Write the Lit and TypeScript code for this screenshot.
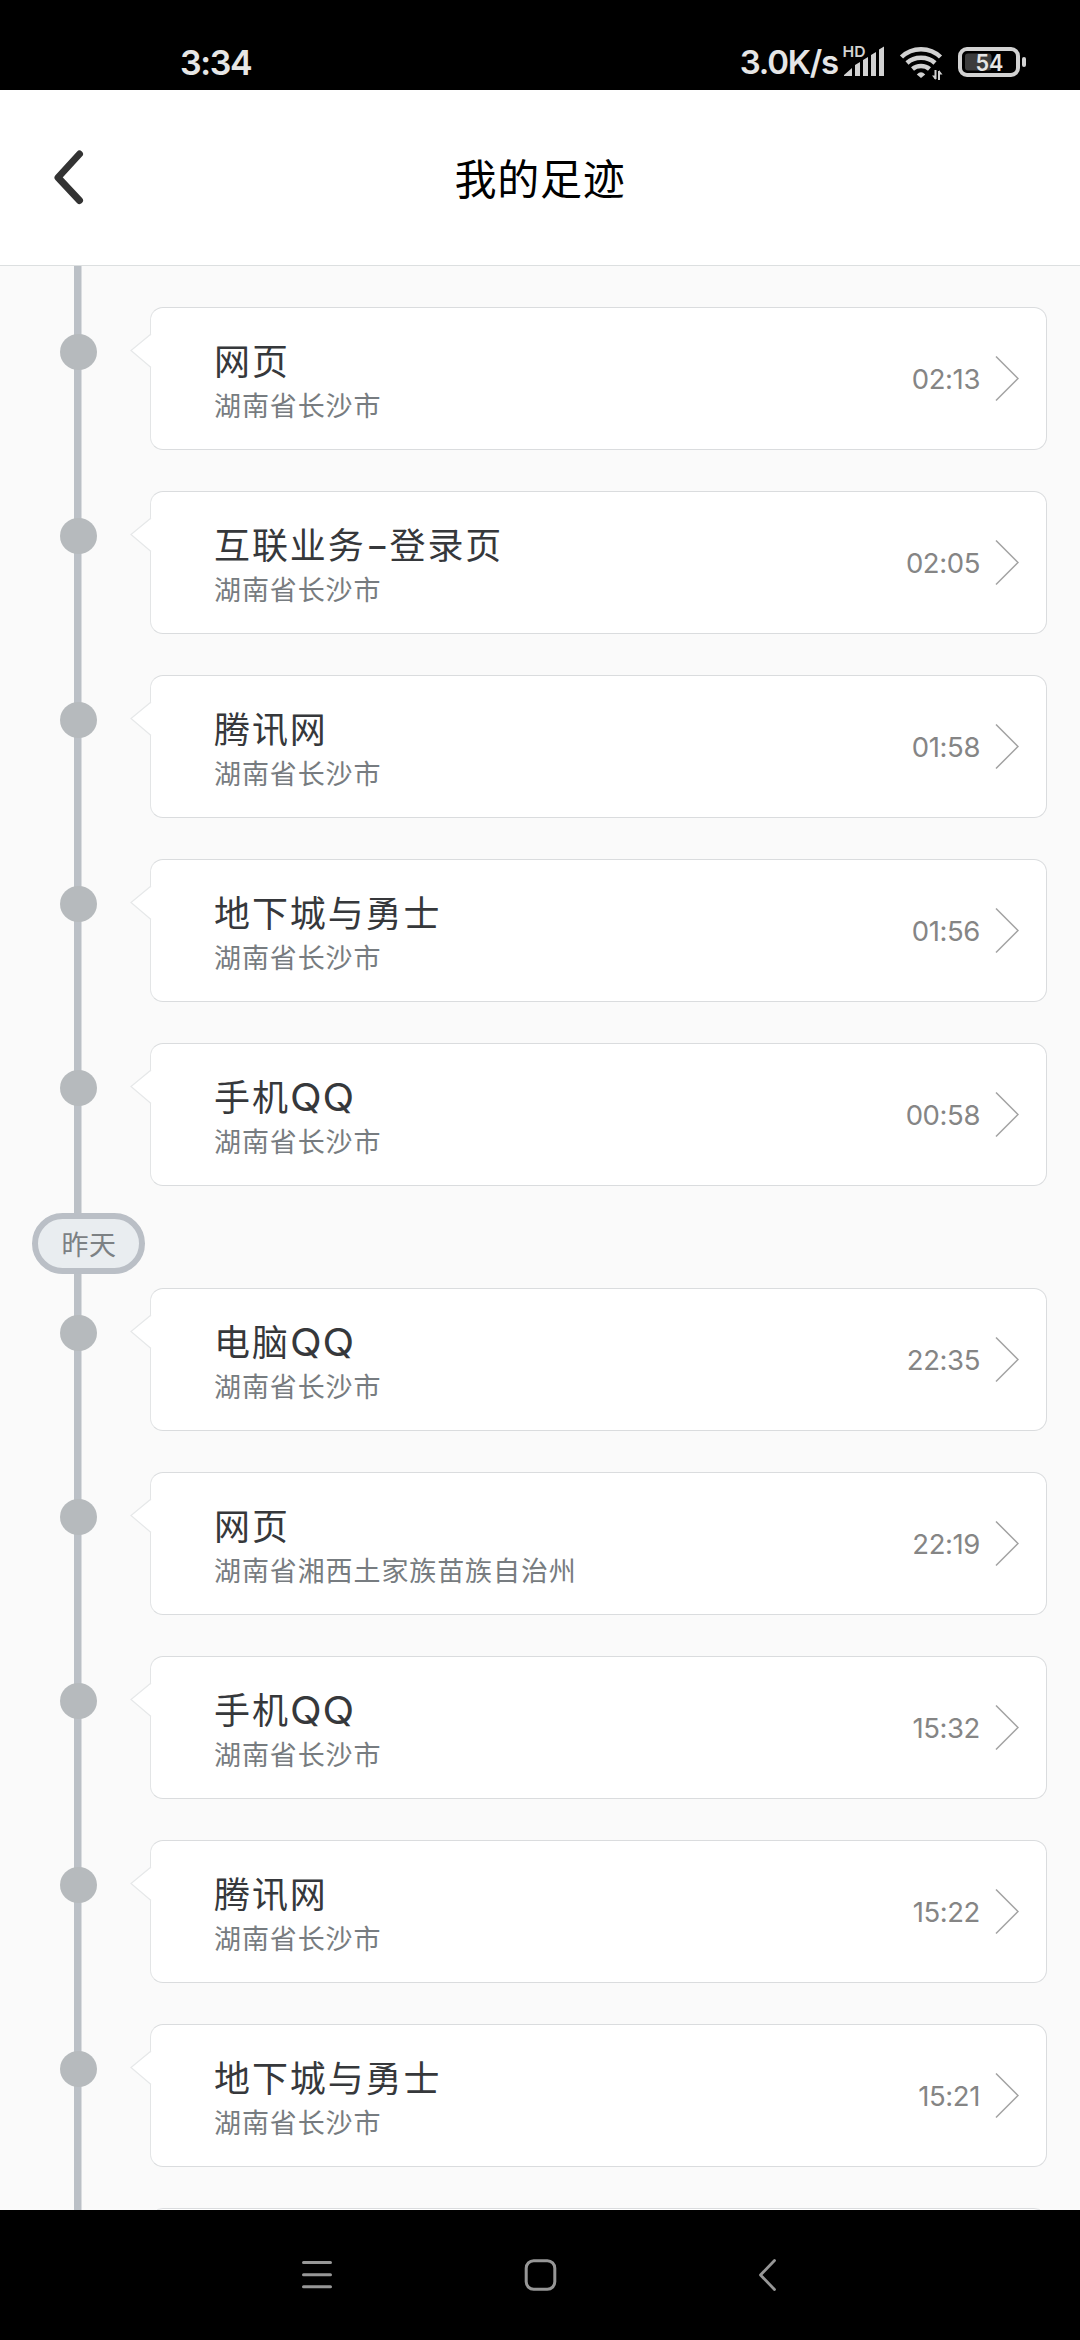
import { LitElement, html, css, svg } from "lit";
import { customElement, property } from "lit/decorators.js";

interface Visit {
  title: string;
  place: string;
  time: string;
}

const CHANGSHA = "湖南省长沙市";

const TODAY: Visit[] = [
  { title: "网页", place: CHANGSHA, time: "02:13" },
  { title: "互联业务-登录页", place: CHANGSHA, time: "02:05" },
  { title: "腾讯网", place: CHANGSHA, time: "01:58" },
  { title: "地下城与勇士", place: CHANGSHA, time: "01:56" },
  { title: "手机QQ", place: CHANGSHA, time: "00:58" },
];

const YESTERDAY: Visit[] = [
  { title: "电脑QQ", place: CHANGSHA, time: "22:35" },
  { title: "网页", place: "湖南省湘西土家族苗族自治州", time: "22:19" },
  { title: "手机QQ", place: CHANGSHA, time: "15:32" },
  { title: "腾讯网", place: CHANGSHA, time: "15:22" },
  { title: "地下城与勇士", place: CHANGSHA, time: "15:21" },
];

@customElement("status-bar")
class StatusBar extends LitElement {
  static styles = css`
    :host {
      display: flex;
      align-items: flex-start;
      box-sizing: border-box;
      height: 90px;
      padding: 42px 54px 0 180px;
      background: #000;
      color: #e6e6e6;
      font-family: Inter, "Noto Sans", sans-serif;
      font-weight: 600;
      line-height: 41px;
      white-space: nowrap;
    }
    .clock { font-size: 34px; letter-spacing: -1.4px; }
    .speed { margin-left: auto; font-size: 33px; letter-spacing: -1.2px; }
    svg { display: block; margin-top: -2px; }
    .signal { margin-left: 5px; }
    .wifi { margin-left: 14px; }
    .battery { margin-left: 14px; }
  `;

  render() {
    return html`
      <span class="clock">3:34</span>
      <span class="speed">3.0K/s</span>
      <svg class="signal" width="42" height="42" viewBox="843 40 42 42" fill="#d2d2d2">
        <text x="842.5" y="57" font-size="15" textLength="23" lengthAdjust="spacingAndGlyphs">HD</text>
        <path d="M844 76v-1l8-7v8zM855 76V65l5-3v14zM863 76V60l5-3v19zM871 76V55l5-3v24zM879 76V49.500l5-3V76z" />
      </svg>
      <svg class="wifi" width="44" height="42" viewBox="899 40 44 42" fill="none" stroke="#d2d2d2" stroke-width="4.500">
        <path d="M901.500 57C912 46.500 930 46.500 940.500 57M907 63C914.500 56 927.500 56 935 63M912.500 69C917 65 925 65 929.500 69" />
        <path d="M916.800 74.500q4.200-4.500 8.400 0l-4.200 3.500z" fill="#d2d2d2" stroke="none" />
        <path d="M935.500 70v9M939 80v-9" stroke-width="2" />
        <path d="M932 75.500h3.500v4.500zM942.500 74.500h-3.500v-4.500z" fill="#d2d2d2" stroke="none" />
      </svg>
      <svg class="battery" width="69" height="42" viewBox="957 40 69 42">
        <rect x="965" y="53.500" width="26.500" height="17" rx="3" fill="#3c3c3c" />
        <rect x="960" y="49" width="58" height="26" rx="7" fill="none" stroke="#d2d2d2" stroke-width="4" />
        <rect x="1022" y="57" width="4" height="10" rx="2" fill="#d2d2d2" />
        <text x="975.500" y="71.300" font-size="22.500" textLength="28" lengthAdjust="spacingAndGlyphs" fill="#e6e6e6">54</text>
      </svg>
    `;
  }
}

@customElement("page-header")
class PageHeader extends LitElement {
  static styles = css`
    :host {
      display: grid;
      grid-template-columns: 140px 1fr 140px;
      align-items: center;
      box-sizing: border-box;
      height: 176px;
      padding-bottom: 1px;
      border-bottom: 1px solid #dcdfe0;
      background: #fff;
    }
    svg { display: block; margin-left: 48px; }
    h1 {
      margin: 0;
      font: 400 42px/60px "Noto Sans CJK SC", sans-serif;
      letter-spacing: 0.8px;
      text-align: center;
      color: #000;
    }
  `;

  render() {
    return html`
      <svg width="40" height="64" viewBox="48 145 40 64" fill="none" stroke="#333" stroke-width="7" stroke-linecap="round" stroke-linejoin="round">
        <path d="M79.500 154L58 177.500L79.500 200.500" />
      </svg>
      <h1>我的足迹</h1>
    `;
  }
}

@customElement("visit-row")
class VisitRow extends LitElement {
  @property({ attribute: false }) visit!: Visit;

  static styles = css`
    :host {
      display: flex;
      align-items: flex-start;
      height: 143px;
      padding: 0 33px 0 60px;
    }
    .dot {
      flex: none;
      width: 37px;
      height: 36px;
      margin: 27px 53px 0 0;
      border-radius: 50%;
      background: #b6babd;
    }
    .card {
      position: relative;
      flex: 1;
      display: flex;
      align-items: center;
      box-sizing: border-box;
      height: 143px;
      padding: 0 27px 0 63px;
      border: 1px solid #dadcde;
      border-left-color: #e3e5e6;
      border-radius: 13px;
      background: #fff;
    }
    .pointer { position: absolute; left: -21px; top: 24px; }
    .text { flex: 1; padding-top: 4px; }
    .title {
      height: 48px;
      font: 400 36px/48px Inter, "Noto Sans CJK SC", sans-serif;
      letter-spacing: 1.9px;
      color: #36383b;
    }
    .latin {
      display: inline-block;
      font-size: 38px;
      line-height: 1;
      letter-spacing: 0.8px;
      transform: scaleX(1.09);
      transform-origin: left;
    }
    .dash {
      display: inline-block;
      margin: 0 3.700px;
      line-height: 1;
      letter-spacing: 0;
      transform: scaleX(1.4);
    }
    .place {
      font: 400 27px/38px "Noto Sans CJK SC", sans-serif;
      letter-spacing: 0.9px;
      color: #777c80;
    }
    .time {
      margin-right: 15px;
      font: 400 27.5px/40px Inter, sans-serif;
      letter-spacing: -0.4px;
      color: #858585;
    }
    .chevron { flex: none; display: block; }
  `;

  private titleRuns() {
    return this.visit.title.split(/(-|[A-Z]+)/).filter(Boolean).map((run) => {
      if (run === "-") return html`<span class="dash">-</span>`;
      return /^[A-Z]/.test(run) ? html`<span class="latin">${run}</span>` : run;
    });
  }

  render() {
    return html`
      <span class="dot"></span>
      <div class="card">
        <svg class="pointer" width="22" height="38" viewBox="0 0 22 38">
          <path d="M22 2L1 18.500L22 36z" fill="#fff" />
          <path d="M21 2L1 18.500L21 35.500" fill="none" stroke="#e6e8e9" stroke-width="1.200" />
        </svg>
        <div class="text">
          <div class="title">${this.titleRuns()}</div>
          <div class="place">${this.visit.place}</div>
        </div>
        <span class="time">${this.visit.time}</span>
        <svg class="chevron" width="24" height="46" viewBox="0 0 24 46" fill="none" stroke="#a2a2a2" stroke-width="1.500">
          <path d="M1 0.500L23 22.500L1 44.500" />
        </svg>
      </div>
    `;
  }
}

@customElement("nav-bar")
class NavBar extends LitElement {
  static styles = css`
    :host {
      display: flex;
      justify-content: space-between;
      align-items: center;
      box-sizing: border-box;
      height: 130px;
      padding: 0 294px 0 297px;
      background: #000;
    }
    svg { display: block; }
  `;

  private icon(shape: unknown) {
    return html`<svg width="40" height="40" viewBox="0 0 40 40" fill="none" stroke="#979797" stroke-width="3" stroke-linecap="round" stroke-linejoin="round">${shape}</svg>`;
  }

  render() {
    return html`
      ${this.icon(svg`<path d="M6.500 7.500h27M6.500 19.700h27M6.500 31.700h27" />`)}
      ${this.icon(svg`<rect x="4.200" y="5.700" width="28.600" height="28.600" rx="7.500" />`)}
      ${this.icon(svg`<path d="M28.500 5.500L14.500 20L28.500 34.500" stroke-width="2.800" />`)}
    `;
  }
}

@customElement("app-root")
class AppRoot extends LitElement {
  static styles = css`
    :host {
      display: flex;
      flex-direction: column;
      height: 2340px;
      width: 1080px;
      overflow: hidden;
      background: #fafafa;
    }
    status-bar, page-header, nav-bar { flex: none; }
    .timeline {
      flex: 1;
      min-height: 0;
      overflow: hidden;
      padding-top: 41px;
      background: linear-gradient(#bbc0c6, #bbc0c6) 74px 0 / 7.500px 100% no-repeat;
    }
    .group { display: flex; flex-direction: column; gap: 41px; }
    .day {
      box-sizing: border-box;
      width: 113px;
      height: 61px;
      margin: 27px 0 14px 32px;
      padding-left: 1px;
      border: 6.500px solid #babfc6;
      border-radius: 31px;
      background: #e9edf0;
      font: 400 27px/49px "Noto Sans CJK SC", sans-serif;
      letter-spacing: 0.5px;
      text-align: center;
      color: #7c8184;
    }
    .upcoming {
      height: 60px;
      margin: 41px 33px 0 150px;
      border: 1px solid #dadcde;
      border-radius: 13px;
      background: #fff;
    }
  `;

  private group(visits: Visit[]) {
    return html`<div class="group">${visits.map((v) => html`<visit-row .visit=${v}></visit-row>`)}</div>`;
  }

  render() {
    return html`
      <status-bar></status-bar>
      <page-header></page-header>
      <div class="timeline">
        ${this.group(TODAY)}
        <div class="day">昨天</div>
        ${this.group(YESTERDAY)}
        <div class="upcoming"></div>
      </div>
      <nav-bar></nav-bar>
    `;
  }
}
